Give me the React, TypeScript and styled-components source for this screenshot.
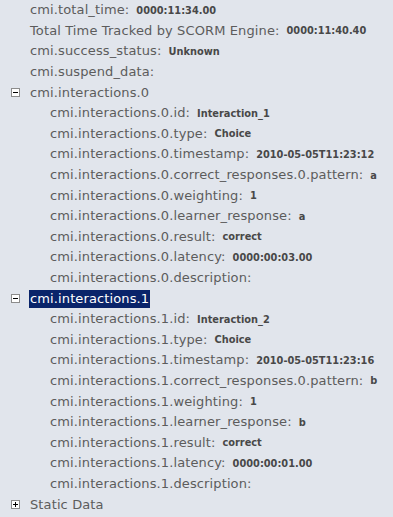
import React from "react";
import styled, { createGlobalStyle } from "styled-components";

const Global = createGlobalStyle`
  html, body { margin: 0; padding: 0; background: #e1e5ec; }
  body { font-family: "DejaVu Sans", Verdana, sans-serif; }
`;

const Tree = styled.div`
  padding: 0 0 0 11px;
  height: 517px;
  overflow: hidden;
  background: #e1e5ec;
`;

const Row = styled.div<{ $level: number }>`
  display: flex;
  align-items: center;
  height: 20.6px;
  padding-left: ${(p) => p.$level * 20}px;
  white-space: nowrap;
`;

const ToggleBox = styled.span`
  position: relative;
  box-sizing: border-box;
  width: 9px;
  height: 9px;
  border: 1px solid #8c8c8c;
  background: #fff;
  margin-right: 9px;
  flex: none;
`;

const HBar = styled.span`
  position: absolute;
  left: 1px;
  top: 3px;
  width: 5px;
  height: 1px;
  background: #000;
`;

const VBar = styled.span`
  position: absolute;
  left: 3px;
  top: 1px;
  width: 1px;
  height: 5px;
  background: #000;
`;

const Spacer = styled.span`
  width: 18px;
  flex: none;
`;

const Label = styled.span<{ $selected?: boolean }>`
  font-size: 13px;
  letter-spacing: 0.12px;
  line-height: 18px;
  padding: 0 1px;
  color: ${(p) => (p.$selected ? "#ffffff" : "#5c5c5c")};
  background: ${(p) => (p.$selected ? "#0a246a" : "transparent")};
`;

const Value = styled.span`
  font-size: 9.8px;
  font-weight: bold;
  color: #484848;
  margin-left: 6px;
`;

type Node = {
  label: string;
  value?: string;
  level: number;
  toggle?: "open" | "closed";
  selected?: boolean;
};

const interaction = (
  n: number,
  id: string,
  ts: string,
  pattern: string,
  latency: string
): Node[] => [
  { label: `cmi.interactions.${n}`, level: 0, toggle: "open", selected: n === 1 },
  { label: `cmi.interactions.${n}.id:`, value: id, level: 1 },
  { label: `cmi.interactions.${n}.type:`, value: "Choice", level: 1 },
  { label: `cmi.interactions.${n}.timestamp:`, value: ts, level: 1 },
  { label: `cmi.interactions.${n}.correct_responses.0.pattern:`, value: pattern, level: 1 },
  { label: `cmi.interactions.${n}.weighting:`, value: "1", level: 1 },
  { label: `cmi.interactions.${n}.learner_response:`, value: pattern, level: 1 },
  { label: `cmi.interactions.${n}.result:`, value: "correct", level: 1 },
  { label: `cmi.interactions.${n}.latency:`, value: latency, level: 1 },
  { label: `cmi.interactions.${n}.description:`, level: 1 },
];

const nodes: Node[] = [
  { label: "cmi.total_time:", value: "0000:11:34.00", level: 0 },
  { label: "Total Time Tracked by SCORM Engine:", value: "0000:11:40.40", level: 0 },
  { label: "cmi.success_status:", value: "Unknown", level: 0 },
  { label: "cmi.suspend_data:", level: 0 },
  ...interaction(0, "Interaction_1", "2010-05-05T11:23:12", "a", "0000:00:03.00"),
  ...interaction(1, "Interaction_2", "2010-05-05T11:23:16", "b", "0000:00:01.00"),
  { label: "Static Data", level: 0, toggle: "closed" },
];

export default function App() {
  return (
    <>
      <Global />
      <Tree>
        {nodes.map((n, i) => (
          <Row key={i} $level={n.level}>
            {n.toggle ? (
              <ToggleBox>
                <HBar />
                {n.toggle === "closed" && <VBar />}
              </ToggleBox>
            ) : (
              <Spacer />
            )}
            <Label $selected={n.selected}>{n.label}</Label>
            {n.value && <Value>{n.value}</Value>}
          </Row>
        ))}
      </Tree>
    </>
  );
}
